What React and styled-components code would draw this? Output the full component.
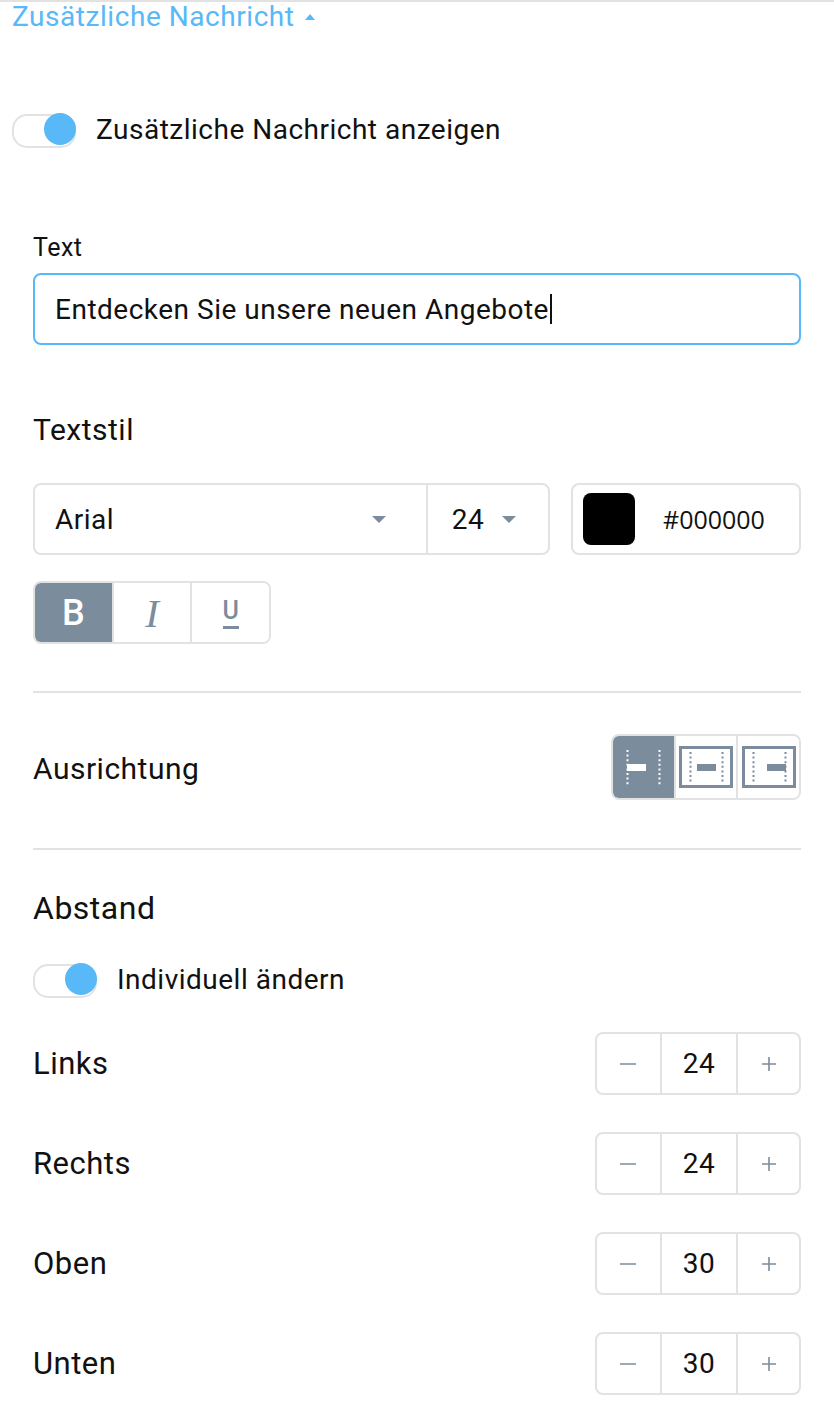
import React from "react";
import styled, { createGlobalStyle } from "styled-components";

const Global = createGlobalStyle`
  html, body { margin: 0; padding: 0; background: #fff; }
  body { font-family: Roboto, "Noto Sans", Arial, sans-serif; color: #111; letter-spacing: 0.5px; }
  * { box-sizing: border-box; }
`;

const BLUE = "#58b8f8";
const SLATE = "#7b8c9c";
const LINE = "#e2e2e2";

const Panel = styled.div`
  width: 834px;
  min-height: 1412px;
  border-top: 2px solid ${LINE};
  display: flex;
  flex-direction: column;
`;

const Header = styled.div`
  display: flex;
  align-items: center;
  gap: 10px;
  padding-left: 12px;
  height: 30px;
  font-size: 28px;
  line-height: 30px;
  letter-spacing: 0.55px;
  color: ${BLUE};
`;

const Caret = styled.span`
  width: 0;
  height: 0;
  border-left: ${(p) => p.$w / 2}px solid transparent;
  border-right: ${(p) => p.$w / 2}px solid transparent;
  ${(p) => (p.$up ? "border-bottom" : "border-top")}: ${(p) => p.$h}px solid ${(p) => p.$c};
`;

const Content = styled.div`
  display: flex;
  flex-direction: column;
  padding: 0 33px 0 ${(p) => p.$pl}px;
`;

const ToggleRow = styled.label`
  display: flex;
  align-items: center;
  height: 32px;
  gap: 20px;
  margin-top: ${(p) => p.$mt || 0}px;
  font-size: 28px;
`;

const Switch = styled.span`
  position: relative;
  width: 64px;
  height: 32px;
  display: inline-block;
  flex: none;
  &::before {
    content: "";
    position: absolute;
    left: 0;
    top: 1px;
    width: 60px;
    height: 30px;
    border-radius: 15px;
    border: 2px solid ${LINE};
    background: #fff;
  }
  &::after {
    content: "";
    position: absolute;
    right: 0;
    top: 0;
    width: 32px;
    height: 32px;
    border-radius: 50%;
    background: ${BLUE};
  }
`;

const Label = styled.div`
  font-size: ${(p) => p.$size}px;
  line-height: ${(p) => p.$lh}px;
  margin-top: ${(p) => p.$mt || 0}px;
  padding-top: ${(p) => p.$pt || 0}px;
  color: #111;
`;

const TextInput = styled.div`
  margin-top: ${(p) => p.$mt}px;
  height: 72px;
  border: 2px solid ${BLUE};
  border-radius: 8px;
  display: flex;
  align-items: center;
  padding-left: 20px;
  font-size: 28px;
  color: #111;
`;

const Cursor = styled.span`
  display: inline-block;
  width: 2px;
  height: 30px;
  background: #111;
  margin-left: 1px;
`;

const StyleRow = styled.div`
  display: flex;
  gap: 21px;
  margin-top: ${(p) => p.$mt}px;
`;

const BoxGroup = styled.div`
  display: flex;
  height: ${(p) => p.$h}px;
  width: ${(p) => p.$w}px;
  border: 2px solid ${LINE};
  border-radius: 8px;
  overflow: hidden;
  margin-top: ${(p) => p.$mt || 0}px;
  flex: none;
`;

const SelectCell = styled.div`
  display: flex;
  align-items: center;
  justify-content: space-between;
  width: ${(p) => p.$w}px;
  padding: 0 ${(p) => p.$pr}px 0 ${(p) => p.$pl}px;
  font-size: 28px;
  color: #111;
  & + & { border-left: 2px solid ${LINE}; }
`;

const ColorBox = styled.div`
  display: flex;
  align-items: center;
  width: 230px;
  height: 72px;
  border: 2px solid ${LINE};
  border-radius: 8px;
  padding-left: 10px;
  gap: 28px;
`;

const Swatch = styled.span`
  width: 52px;
  height: 52px;
  border-radius: 8px;
  background: ${(p) => p.$c};
`;

const Hex = styled.span`
  font-family: "Open Sans", "Noto Sans", sans-serif;
  font-size: 25px;
  letter-spacing: 0;
  color: #111;
`;

const FmtCell = styled.div`
  flex: 1;
  display: flex;
  align-items: center;
  justify-content: center;
  background: ${(p) => (p.$active ? SLATE : "#fff")};
  color: ${(p) => (p.$active ? "#fff" : SLATE)};
  & + & { border-left: 2px solid ${LINE}; }
`;

const BoldGlyph = styled.span`
  font-weight: 500;
  font-size: 36px;
  line-height: 36px;
  letter-spacing: 0;
`;

const ItalicGlyph = styled.span`
  font-family: "Liberation Serif", serif;
  font-style: italic;
  font-size: 41px;
  line-height: 40px;
  letter-spacing: 0;
`;

const UnderGlyph = styled.span`
  font-weight: 500;
  font-size: 25px;
  line-height: 22px;
  letter-spacing: 0;
  border-bottom: 3px solid ${SLATE};
  padding-bottom: 4px;
  margin-top: 4px;
`;

const Divider = styled.hr`
  margin: ${(p) => p.$mt}px 0 0;
  border: none;
  height: 2px;
  background: ${LINE};
`;

const SplitRow = styled.div`
  display: flex;
  align-items: center;
  justify-content: space-between;
  margin-top: ${(p) => p.$mt}px;
`;

const AlignCell = styled.div`
  flex: 1;
  display: flex;
  align-items: center;
  justify-content: center;
  background: ${(p) => (p.$active ? SLATE : "#fff")};
  & + & { border-left: 2px solid ${LINE}; }
`;

const StepCell = styled.div`
  width: ${(p) => p.$w}px;
  display: flex;
  align-items: center;
  justify-content: center;
  font-size: 28px;
  color: #111;
  & + & { border-left: 2px solid ${LINE}; }
`;

const StepRows = styled.div`
  display: flex;
  flex-direction: column;
  gap: 37px;
  margin-top: 37px;
`;

function AlignIcon({ variant, color }) {
  const barX = variant === "left" ? 12 : variant === "center" ? 19 : 26;
  const boxed = variant !== "left";
  return (
    <svg width="56" height="44" viewBox="0 0 56 44">
      {boxed && (
        <rect x="2.5" y="2.5" width="51" height="39" fill="none" stroke={color} strokeWidth="3" />
      )}
      <line x1="12.5" y1={boxed ? 7 : 5} x2="12.5" y2={boxed ? 38 : 41} stroke={color} strokeWidth="2" strokeDasharray="2 2.6" />
      <line x1="44.5" y1={boxed ? 7 : 5} x2="44.5" y2={boxed ? 38 : 41} stroke={color} strokeWidth="2" strokeDasharray="2 2.6" />
      <rect x={barX} y="19" width="19" height="7" fill={color} />
    </svg>
  );
}

const Minus = () => (
  <svg width="16" height="16" viewBox="0 0 16 16">
    <line x1="0" y1="8" x2="16" y2="8" stroke={SLATE} strokeWidth="1.6" />
  </svg>
);
const Plus = () => (
  <svg width="16" height="16" viewBox="0 0 16 16">
    <line x1="1" y1="8" x2="15" y2="8" stroke={SLATE} strokeWidth="1.6" />
    <line x1="8" y1="1" x2="8" y2="15" stroke={SLATE} strokeWidth="1.6" />
  </svg>
);

function Stepper({ label, value }) {
  return (
    <SplitRow $mt={0}>
      <Label $size={31} $lh={34}>{label}</Label>
      <BoxGroup $h={63} $w={206}>
        <StepCell $w={64}><Minus /></StepCell>
        <StepCell $w={78}>{value}</StepCell>
        <StepCell $w={64}><Plus /></StepCell>
      </BoxGroup>
    </SplitRow>
  );
}

export default function App() {
  return (
    <>
      <Global />
      <Panel>
        <Header>
          Zusätzliche Nachricht
          <Caret $up $w={11} $h={6} $c={BLUE} />
        </Header>
        <Content $pl={12}>
          <ToggleRow $mt={81}>
            <Switch />
            Zusätzliche Nachricht anzeigen
          </ToggleRow>
        </Content>
        <Content $pl={33}>
          <Label $size={25} $lh={26} $mt={90}>Text</Label>
          <TextInput $mt={12}>
            Entdecken Sie unsere neuen Angebote<Cursor />
          </TextInput>
          <Label $size={30} $lh={32} $mt={69}>Textstil</Label>
          <StyleRow $mt={37}>
            <BoxGroup $h={72} $w={517}>
              <SelectCell $w={394} $pl={20} $pr={40}>
                Arial <Caret $w={14} $h={7} $c={SLATE} />
              </SelectCell>
              <SelectCell $w={123} $pl={24} $pr={32}>
                24 <Caret $w={14} $h={7} $c={SLATE} />
              </SelectCell>
            </BoxGroup>
            <ColorBox>
              <Swatch $c="#000" />
              <Hex>#000000</Hex>
            </ColorBox>
          </StyleRow>
          <BoxGroup $h={63} $w={238} $mt={26}>
            <FmtCell $active><BoldGlyph>B</BoldGlyph></FmtCell>
            <FmtCell><ItalicGlyph>I</ItalicGlyph></FmtCell>
            <FmtCell><UnderGlyph>U</UnderGlyph></FmtCell>
          </BoxGroup>
          <Divider $mt={47} />
          <SplitRow $mt={41}>
            <Label $size={30} $lh={34} $pt={4}>Ausrichtung</Label>
            <BoxGroup $h={66} $w={190}>
              <AlignCell $active><AlignIcon variant="left" color="#fff" /></AlignCell>
              <AlignCell><AlignIcon variant="center" color={SLATE} /></AlignCell>
              <AlignCell><AlignIcon variant="right" color={SLATE} /></AlignCell>
            </BoxGroup>
          </SplitRow>
          <Divider $mt={48} />
          <Label $size={32} $lh={34} $mt={41}>Abstand</Label>
          <ToggleRow $mt={38}>
            <Switch />
            Individuell ändern
          </ToggleRow>
          <StepRows>
            <Stepper label="Links" value="24" />
            <Stepper label="Rechts" value="24" />
            <Stepper label="Oben" value="30" />
            <Stepper label="Unten" value="30" />
          </StepRows>
        </Content>
      </Panel>
    </>
  );
}
